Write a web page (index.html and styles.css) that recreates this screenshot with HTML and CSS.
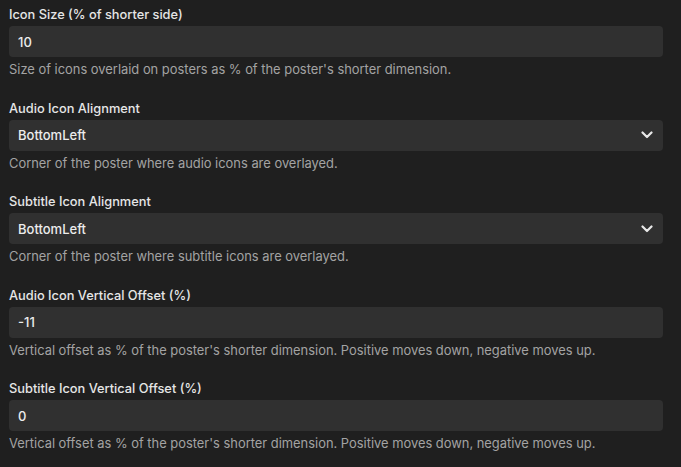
FILE: index.html
```html
<!DOCTYPE html>
<html>
<head>
<meta charset="utf-8">
<link rel="stylesheet" href="styles.css">
</head>
<body>
<div class="form">
  <div class="field">
    <label class="label">Icon Size (% of shorter side)</label>
    <div class="input">10</div>
    <div class="desc">Size of icons overlaid on posters as % of the poster's shorter dimension.</div>
  </div>
  <div class="field">
    <label class="label">Audio Icon Alignment</label>
    <div class="input select">BottomLeft
      <svg class="chev" width="12" height="8" viewBox="0 0 12 8"><path d="M1.5 1.5 L6 6 L10.5 1.5" fill="none" stroke="#e8e8e8" stroke-width="2.2" stroke-linecap="round" stroke-linejoin="round"/></svg>
    </div>
    <div class="desc">Corner of the poster where audio icons are overlayed.</div>
  </div>
  <div class="field">
    <label class="label">Subtitle Icon Alignment</label>
    <div class="input select">BottomLeft
      <svg class="chev" width="12" height="8" viewBox="0 0 12 8"><path d="M1.5 1.5 L6 6 L10.5 1.5" fill="none" stroke="#e8e8e8" stroke-width="2.2" stroke-linecap="round" stroke-linejoin="round"/></svg>
    </div>
    <div class="desc">Corner of the poster where subtitle icons are overlayed.</div>
  </div>
  <div class="field">
    <label class="label">Audio Icon Vertical Offset (%)</label>
    <div class="input">-11</div>
    <div class="desc">Vertical offset as % of the poster's shorter dimension. Positive moves down, negative moves up.</div>
  </div>
  <div class="field">
    <label class="label">Subtitle Icon Vertical Offset (%)</label>
    <div class="input">0</div>
    <div class="desc">Vertical offset as % of the poster's shorter dimension. Positive moves down, negative moves up.</div>
  </div>
</div>
</body>
</html>
```
FILE: styles.css
```css
html, body {
  margin: 0;
  padding: 0;
  background: #1f1f1f;
}
body {
  font-family: Inter, "Noto Sans", sans-serif;
}
.form {
  padding: 6px 18px 0 9px;
  display: flex;
  flex-direction: column;
  gap: 20.5px;
}
.field {
  display: flex;
  flex-direction: column;
}
.label {
  color: #e6e6e6;
  font-size: 12.8px;
  font-weight: 500;
  line-height: 18px;
  margin-bottom: 2px;
}
.input {
  height: 31px;
  box-sizing: border-box;
  background: #303030;
  border-radius: 4px;
  color: #ececec;
  font-size: 13px;
  font-weight: 500;
  padding: 0 9px;
  display: flex;
  align-items: center;
  justify-content: space-between;
}
.chev {
  margin-right: 1px;
}
.desc {
  color: #a3a3a3;
  font-size: 12.9px;
  line-height: 18px;
  margin-top: 4px;
}
```
